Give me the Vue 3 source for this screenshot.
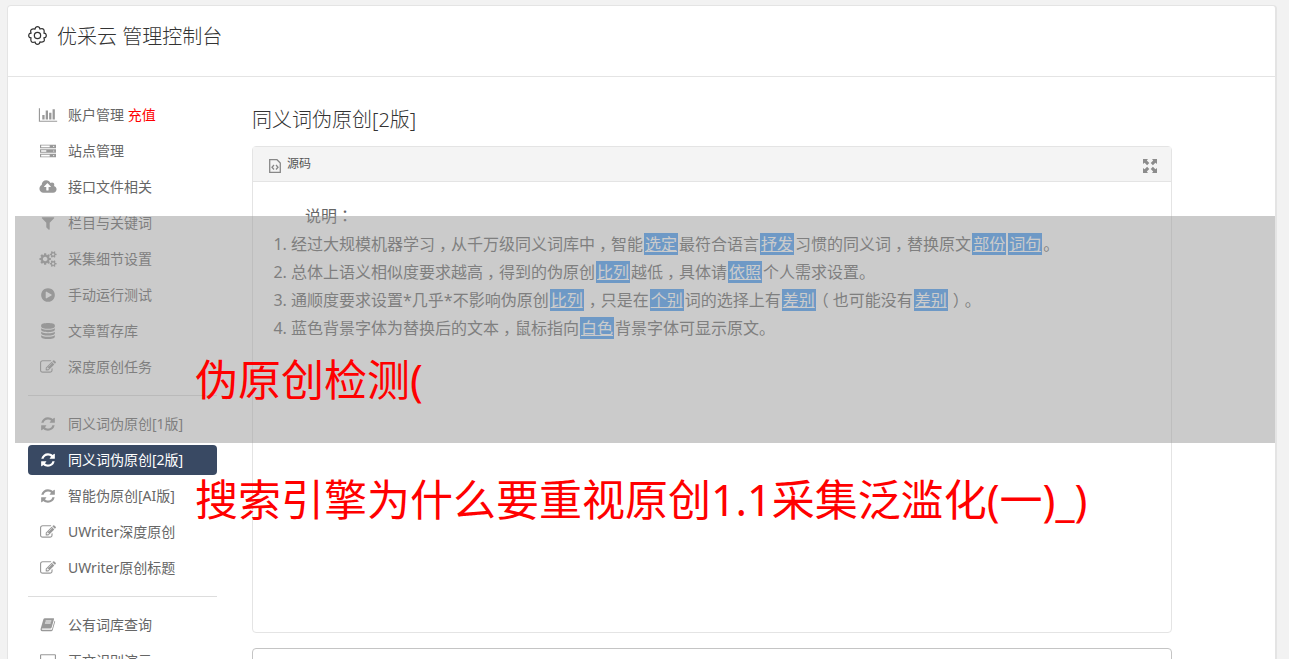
<script setup>
const icons = {
  chart: { box: '0 0 2048 1792', d: 'M640 896v512H384V896zM1024 384v1024H768V384zM2048 1536v128H0V128h128v1408zM1408 640v768h-256V640zM1792 256v1152h-256V256z' },
  server: { box: '0 0 1792 1792', d: 'M0 192h1792v384H0zM128 288v192h960V288zM1470 384a66 66 0 1 0 132 0 66 66 0 1 0-132 0M0 704h1792v384H0zM128 800v192h576V800zM1470 896a66 66 0 1 0 132 0 66 66 0 1 0-132 0M0 1216h1792v384H0zM128 1312v192h960v-192zM1470 1408a66 66 0 1 0 132 0 66 66 0 1 0-132 0' },
  cloud: { box: '-64 0 1920 1792', d: 'M1216 864q0-14-9-23l-352-352q-9-9-23-9t-23 9l-351 351q-10 12-10 24 0 14 9 23t23 9h224v352q0 13 9.500 22.500t22.500 9.500h192q13 0 22.500-9.500t9.500-22.500v-352h224q13 0 22.500-9.500t9.500-22.500zm640 288q0 159-112.500 271.500t-271.500 112.500h-1088q-185 0-316.500-131.500t-131.500-316.500q0-130 70-240t188-165q-2-30-2-43 0-212 150-362t362-150q156 0 285.500 87t188.500 231q71-62 166-62 106 0 181 75t75 181q0 76-41 138 130 31 213.500 135.500t83.500 238.500z' },
  filter: { box: '0 0 1792 1792', d: 'M1595 295q17 41-14 70l-493 493v742q0 42-39 59-13 5-25 5-27 0-45-19l-256-256q-19-19-19-45v-486l-493-493q-31-29-14-70 17-39 59-39h1280q42 0 59 39z' },
  cogs: { box: '-64 0 1920 1792', d: 'M832 896q0-106-75-181t-181-75-181 75-75 181 75 181 181 75 181-75 75-181zm768 512q0-52-38-90t-90-38-90 38-38 90q0 53 37.500 90.500t90.500 37.500 90.500-37.500 37.500-90.500zm0-1024q0-52-38-90t-90-38-90 38-38 90q0 53 37.500 90.500t90.500 37.500 90.500-37.500 37.500-90.500zm-384 421v185q0 10-7 19.500t-16 10.500l-155 24q-11 35-32 76 34 48 90 115 7 11 7 20 0 12-7 19-23 30-82.500 89.500t-78.500 59.500q-11 0-21-7l-115-90q-37 19-77 31-11 108-23 155-7 24-30 24h-186q-11 0-20-7.500t-10-17.500l-23-153q-34-10-75-31l-118 89q-7 7-20 7-11 0-21-8-144-133-144-160 0-9 7-19 10-14 41-53t47-61q-23-44-35-82l-152-24q-10-1-17-9.500t-7-19.500v-185q0-10 7-19.500t16-10.500l155-24q11-35 32-76-34-48-90-115-7-11-7-20 0-12 7-20 22-30 82-89t79-59q11 0 21 7l115 90q34-18 77-32 11-108 23-154 7-24 30-24h186q11 0 20 7.500t10 17.500l23 153q34 10 75 31l118-89q8-7 20-7 11 0 21 8 144 133 144 160 0 8-7 19-12 16-42 54t-45 60q23 48 34 82l152 23q10 2 17 10.500t7 19.500zm640 533v140q0 16-149 31-12 27-30 52 51 113 51 138 0 4-4 7-122 71-124 71-8 0-46-47t-52-68q-20 2-30 2t-30-2q-14 21-52 68t-46 47q-2 0-124-71-4-3-4-7 0-25 51-138-18-25-30-52-149-15-149-31v-140q0-16 149-31 13-29 30-52-51-113-51-138 0-4 4-7 4-2 35-20t59-34 30-16q8 0 46 46.500t52 67.500q20-2 30-2t30 2q51-71 92-112l6-2q4 0 124 70 4 3 4 7 0 25-51 138 17 23 30 52 149 15 149 31zm0-1024v140q0 16-149 31-12 27-30 52 51 113 51 138 0 4-4 7-122 71-124 71-8 0-46-47t-52-68q-20 2-30 2t-30-2q-14 21-52 68t-46 47q-2 0-124-71-4-3-4-7 0-25 51-138-18-25-30-52-149-15-149-31v-140q0-16 149-31 13-29 30-52-51-113-51-138 0-4 4-7 4-2 35-20t59-34 30-16q8 0 46 46.500t52 67.500q20-2 30-2t30 2q51-71 92-112l6-2q4 0 124 70 4 3 4 7 0 25-51 138 17 23 30 52 149 15 149 31z' },
  play: { box: '0 0 1792 1792', d: 'M896 128q209 0 385.500 103t279.500 279.500 103 385.500-103 385.500-279.500 279.500-385.500 103-385.500-103-279.500-279.500-103-385.500 103-385.500 279.500-279.500 385.500-103zm384 823q32-18 32-55t-32-55l-544-320q-31-19-64-1-32 19-32 56v640q0 37 32 56 16 8 32 8 17 0 32-9z' },
  database: { box: '0 0 1792 1792', d: 'M128 256C128 80 500 0 896 0s768 80 768 256v128c0 176-372 256-768 256S128 560 128 384zM128 598c180 120 450 170 768 170s588-50 768-170v170c0 176-372 256-768 256S128 944 128 768zM128 982c180 120 450 170 768 170s588-50 768-170v170c0 176-372 256-768 256s-768-80-768-256zM128 1366c180 120 450 170 768 170s588-50 768-170v170c0 176-372 256-768 256s-768-80-768-256z' },
  edit: { box: '0 0 1792 1792', d: 'M888 1184l116-116-152-152-116 116v56h96v96h56zm440-720q-16-16-33 1l-350 350q-17 17-1 33t33-1l350-350q17-17 1-33zm80 594v190q0 119-84.500 203.500t-203.500 84.500h-832q-119 0-203.500-84.500t-84.500-203.500v-832q0-119 84.500-203.500t203.500-84.500h832q63 0 117 25 15 7 18 23 3 17-9 29l-49 49q-14 14-32 8-23-6-45-6h-832q-66 0-113 47t-47 113v832q0 66 47 113t113 47h832q66 0 113-47t47-113v-126q0-13 9-22l64-64q15-15 35-7t20 29zm-96-738l288 288-672 672h-288v-288zm444 132l-92 92-288-288 92-92q28-28 68-28t68 28l152 152q28 28 28 68t-28 68z' },
  refresh: { box: '0 0 1792 1792', d: 'M1639 1056q0 5-1 7-64 268-268 434.500t-478 166.500q-146 0-282.500-55t-243.500-157l-129 129q-19 19-45 19t-45-19-19-45v-448q0-26 19-45t45-19h448q26 0 45 19t19 45-19 45l-137 137q71 66 161 102t187 36q134 0 250-65t186-179q11-17 53-117 8-23 30-23h192q13 0 22.500 9.500t9.500 22.500zm25-800v448q0 26-19 45t-45 19h-448q-26 0-45-19t-19-45 19-45l138-138q-148-137-349-137-134 0-250 65t-186 179q-11 17-53 117-8 23-30 23h-199q-13 0-22.500-9.500t-9.500-22.500v-7q65-268 270-434.500t480-166.500q146 0 284 55.500t245 156.500l130-129q19-19 45-19t45 19 19 45z' },
  book: { box: '0 0 1792 1792', d: 'M560 128h950q90 0 64 100l-270 950q-30 110-140 110H250q-60 0-60 60 0 80 110 80h970q60 0 80-60l280-960q90 40 66 130l-280 940q-40 130-170 130H270Q60 1608 60 1400q0-60 20-110L370 280q40-152 190-152zM640 384l-30 110h640l30-110zM570 620l-30 110h640l30-110z' },
  laptop: { box: '0 0 1792 1792', d: 'M130 128h1532q130 0 130 130v960q0 130-130 130H130Q0 1348 0 1218V258Q0 128 130 128zM128 256v964h1536V256zM640 1348h512v250H640z' }
}

const groups = [
  [
    { icon: 'chart', text: '账户管理', extra: '充值' },
    { icon: 'server', text: '站点管理' },
    { icon: 'cloud', text: '接口文件相关' },
    { icon: 'filter', text: '栏目与关键词' },
    { icon: 'cogs', text: '采集细节设置' },
    { icon: 'play', text: '手动运行测试' },
    { icon: 'database', text: '文章暂存库' },
    { icon: 'edit', text: '深度原创任务' }
  ],
  [
    { icon: 'refresh', text: '同义词伪原创[1版]' },
    { icon: 'refresh', text: '同义词伪原创[2版]', active: true },
    { icon: 'refresh', text: '智能伪原创[AI版]' },
    { icon: 'edit', text: 'UWriter深度原创' },
    { icon: 'edit', text: 'UWriter原创标题' }
  ],
  [
    { icon: 'book', text: '公有词库查询' },
    { icon: 'laptop', text: '正文识别演示' }
  ]
]

// Words wrapped in braces are the replaced synonyms.
const notes = [
  '经过大规模机器学习，从千万级同义词库中，智能{选定}最符合语言{抒发}习惯的同义词，替换原文{部份}{词句}。',
  '总体上语义相似度要求越高，得到的伪原创{比列}越低，具体请{依照}个人需求设置。',
  '通顺度要求设置*几乎*不影响伪原创{比列}，只是在{个别}词的选择上有{差别}（也可能没有{差别}）。',
  '蓝色背景字体为替换后的文本，鼠标指向{白色}背景字体可显示原文。'
].map((line) =>
  line.split(/(\{.*?\}|[，（）])/).filter(Boolean).map((part) => ({
    text: part.replace(/[{}]/g, ''),
    kind: part[0] === '{' ? 'swap' : /[，（）]/.test(part) ? 'mark' : ''
  }))
)
</script>

<template>
  <div class="page">
    <main class="card">
      <header class="top">
        <svg class="gear" viewBox="0 0 20 20" aria-hidden="true">
          <path d="M8 1.500Q10 0 12 1.500L12.600 3.200Q15.400 2.200 16.400 3.600T16.800 7.400L18.500 8Q20 10 18.500 12L16.800 12.600Q17.800 15.400 16.400 16.400T12.600 16.800L12 18.500Q10 20 8 18.500L7.400 16.800Q4.600 17.800 3.600 16.400T3.200 12.600L1.500 12Q0 10 1.500 8L3.200 7.400Q2.200 4.600 3.600 3.600T7.400 3.200z" />
          <circle cx="10" cy="10" r="3.300" />
        </svg>
        <h1>优采云 管理控制台</h1>
      </header>
      <div class="body">
        <nav class="menu">
          <ul v-for="(group, g) in groups" :key="g">
            <li v-for="item in group" :key="item.text">
              <a href="#" :class="{ active: item.active }">
                <svg class="icon" :viewBox="icons[item.icon].box" aria-hidden="true">
                  <path fill-rule="evenodd" :d="icons[item.icon].d" />
                </svg>
                <span>{{ item.text }} <em v-if="item.extra">{{ item.extra }}</em></span>
              </a>
            </li>
          </ul>
        </nav>
        <section class="content">
          <h2>同义词伪原创[2版]</h2>
          <div class="editor">
            <div class="toolbar">
              <button type="button" class="source">
                <svg viewBox="0 0 12 14" aria-hidden="true">
                  <path d="M.7.7h7.300l3.300 3.300v9.300H.7zM5 6 3 8.200 5 10.500M7 6l2 2.200-2 2.300" />
                </svg>
                源码
              </button>
              <button type="button" class="expand" aria-label="全屏">
                <svg viewBox="0 0 14 14" aria-hidden="true">
                  <path d="M0 0h5L3.800 1.600 6.300 4.100 4.100 6.300 1.600 3.800 0 5zM14 0v5l-1.600-1.200L9.900 6.300 7.700 4.100l2.500-2.500L9 0zM0 14V9l1.600 1.200L4.100 7.700l2.200 2.200-2.500 2.500L5 14zM14 14H9l1.200-1.600-2.500-2.500 2.200-2.200 2.500 2.500L14 9z" />
                </svg>
              </button>
            </div>
            <div class="text">
              <p>说明<span class="colon">：</span></p>
              <ol>
                <li v-for="(line, i) in notes" :key="i"><span v-for="(part, p) in line" :key="p" :class="part.kind">{{ part.text }}</span></li>
              </ol>
            </div>
          </div>
          <textarea class="result" aria-label="结果"></textarea>
        </section>
      </div>
    </main>
    <div class="band">
      <p>伪原创检测(</p>
      <p>搜索引擎为什么要重视原创1.1采集泛滥化(一)_)</p>
    </div>
  </div>
</template>

<style>
body {
  background: #f2f2f2;
}
</style>

<style scoped>
.page {
  position: relative;
  box-sizing: border-box;
  height: 100vh;
  padding: 5px 12px 0 7px;
  overflow: hidden;
  color: #666;
  font: 14px/20px "Noto Sans", "Noto Sans CJK SC", sans-serif;
}
.card {
  border: 1px solid #e4e4e4;
  border-right-width: 2px;
  border-radius: 4px;
  background: #fff;
}
.top {
  display: flex;
  gap: 10px;
  padding: 16px 20px 24px;
  border-bottom: 1px solid #e4e4e4;
}
.gear {
  width: 19px;
  height: 19px;
  margin-top: 4px;
  fill: none;
  stroke: #333;
  stroke-width: 1.3;
}
h1, h2 {
  margin: 0;
  color: #333;
  font-size: 20px;
  font-weight: 300;
  line-height: 30px;
}
.body {
  display: flex;
  gap: 35px;
  padding: 23px 103px 0 20px;
}
.menu {
  flex: 0 0 189px;
}
.menu ul {
  display: flex;
  flex-direction: column;
  gap: 6px;
  margin: 0;
  padding: 0;
  list-style: none;
}
.menu ul + ul {
  margin-top: 13px;
  padding-top: 13px;
  border-top: 1px solid #ddd;
}
.menu a {
  display: flex;
  align-items: center;
  gap: 10px;
  height: 30px;
  padding-left: 10px;
  border-radius: 4px;
  color: #666;
  text-decoration: none;
}
.menu a.active {
  background: #394963;
  color: #fff;
}
.menu em {
  color: #f00;
  font-style: normal;
}
.icon {
  width: 20px;
  height: 16px;
  fill: #999;
}
.active .icon {
  fill: #fff;
}
.content {
  flex: 1;
  min-width: 0;
}
h2 {
  margin: 5px 0 11px;
}
.editor {
  box-sizing: border-box;
  min-height: 487px;
  border: 1px solid #e4e4e4;
  border-radius: 4px;
}
.toolbar {
  display: flex;
  align-items: center;
  justify-content: space-between;
  height: 34px;
  padding: 0 14px 0 16px;
  border-bottom: 1px solid #e4e4e4;
  background: #f4f4f4;
}
button {
  display: flex;
  align-items: center;
  gap: 6px;
  padding: 0;
  border: 0;
  background: none;
  color: #555;
  font: inherit;
  font-size: 12px;
}
.source svg {
  width: 12px;
  height: 14px;
  margin-top: 4px;
  fill: none;
  stroke: #888;
  stroke-width: 1.3;
}
.expand svg {
  width: 14px;
  height: 14px;
  margin-top: 4px;
  fill: #8c8c8c;
}
.text {
  padding: 20px;
  font-size: 16px;
  line-height: 28px;
}
.text p {
  margin: 0;
  text-indent: 2em;
}
.text ol {
  margin: 0;
  padding-left: 18px;
}
.colon {
  font-family: "Noto Sans CJK TC", sans-serif;
  line-height: 20px;
}
/* Punctuation sits in the middle of a full-width cell. */
.mark {
  display: inline-block;
  width: 16px;
  font-feature-settings: "halt";
  line-height: 20px;
  text-align: center;
}
.swap {
  margin: 0 1px;
  padding: 0 1px;
  background: #459bf5;
  color: #fff;
  line-height: 20px;
  text-decoration: underline;
}
.result {
  display: block;
  box-sizing: border-box;
  width: 100%;
  height: 300px;
  margin-top: 15px;
  border: 1px solid #c4c4c4;
  border-radius: 4px;
  resize: none;
}
.band {
  position: absolute;
  top: 216px;
  right: 14px;
  left: 15px;
  box-sizing: border-box;
  height: 227px;
  padding: 104px 0 0 180px;
  background: rgba(151, 151, 151, 0.5);
  color: #f00;
  font-size: 43px;
  line-height: 120px;
  white-space: nowrap;
}
.band p {
  margin: 0;
}
</style>
